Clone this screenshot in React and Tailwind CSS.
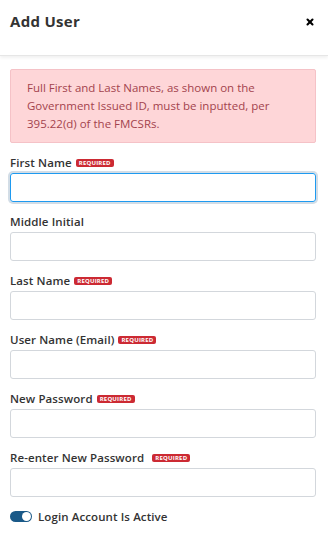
import { X } from 'lucide-react';

const fields = [
    { label: 'First Name', required: true, focused: true },
    { label: 'Middle Initial' },
    { label: 'Last Name', required: true },
    { label: 'User Name (Email)', required: true },
    { label: 'New Password', required: true },
    { label: 'Re-enter New Password', required: true, wide: true },
];

export default function App() {
    return (
        <div className="min-h-[537px] w-[328px] bg-white text-[#333]" style={{ fontFamily: '"Open Sans", "Liberation Sans", sans-serif' }}>
            <header className="h-[56px] pl-[10px] pr-[13px] flex items-center justify-between border-b border-[#e6e6e6] shadow-[0_2px_3px_rgba(0,0,0,0.06)]">
                <h1 className="text-[15px] font-bold tracking-[0.3px] -mt-[12px]">Add User</h1>
                <X className="w-[10px] h-[10px] -mt-[12px] text-black" strokeWidth={5} />
            </header>

            <div className="pl-[10px] pr-[12px] pt-[13px]">
                <div className="rounded-[2px] border border-[#f5c2c7] bg-[#fed6d8] px-[16px] py-[9px] text-[11.5px] leading-[18px] text-[#a3434d]">
                    Full First and Last Names, as shown on the Government Issued ID, must be inputted, per 395.22(d) of the FMCSRs.
                </div>

                <div className="mt-[12px] flex flex-col gap-[12px]">
                    {fields.map((f) => (
                        <Field key={f.label} {...f} />
                    ))}
                </div>

                <div className="mt-[11px] flex items-center gap-[6px]">
                    <div className="w-[22px] h-[11px] rounded-full bg-[#1a5988] flex items-center justify-end pr-[1px]">
                        <div className="w-[9px] h-[9px] rounded-full bg-white" />
                    </div>
                    <span className="text-[11.5px] font-semibold tracking-[0.1px]">Login Account Is Active</span>
                </div>
            </div>
        </div>
    );
}

function Field({ label, required, focused, wide }) {
    return (
        <div>
            <div className="h-[16px] flex items-center">
                <span className="text-[11.5px] font-semibold leading-none tracking-[0.1px]">{label}</span>
                {required && (
                    <span className={`${wide ? 'ml-[8px]' : 'ml-[4px]'} h-[8px] px-[3px] rounded-[2px] bg-[#cc2a33] text-white text-[6px] font-bold leading-[8px] tracking-[0.2px]`}>
                        REQUIRED
                    </span>
                )}
            </div>
            <input
                className={
                    focused
                        ? 'mt-[2px] block w-full h-[29px] rounded-[3px] border border-[#1e9af0] ring-2 ring-[#d3dde6] outline-none'
                        : 'mt-[2px] block w-full h-[29px] rounded-[3px] border border-[#d3d7dc] outline-none'
                }
            />
        </div>
    );
}
